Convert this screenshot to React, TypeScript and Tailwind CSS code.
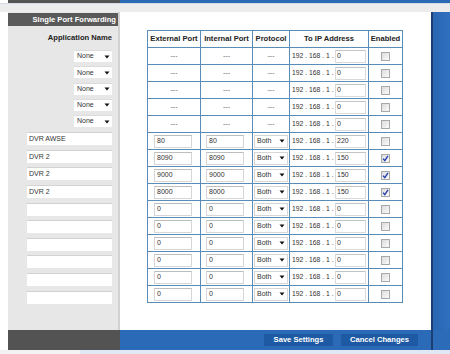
import React from "react";

const dashRows = 5;
const dataRows = [
  { ext: "80", int: "80", ip: "220", on: false },
  { ext: "8090", int: "8090", ip: "150", on: true },
  { ext: "9000", int: "9000", ip: "150", on: true },
  { ext: "8000", int: "8000", ip: "150", on: true },
  { ext: "0", int: "0", ip: "0", on: false },
  { ext: "0", int: "0", ip: "0", on: false },
  { ext: "0", int: "0", ip: "0", on: false },
  { ext: "0", int: "0", ip: "0", on: false },
  { ext: "0", int: "0", ip: "0", on: false },
  { ext: "0", int: "0", ip: "0", on: false },
];
const appNames = ["DVR AWSE", "DVR 2", "DVR 2", "DVR 2", "", "", "", "", "", ""];

function Arrow() {
  return (
    <svg width="6" height="4" viewBox="0 0 6 4" className="shrink-0">
      <path d="M0.5 0.5H5.5L3 3.5Z" fill="#111" />
    </svg>
  );
}

function Check({ on }: { on: boolean }) {
  return (
    <div className="mx-auto w-[9px] h-[9px] border border-[#a9a9a9] bg-gradient-to-br from-[#dcdcdc] to-[#fbfbfb] flex items-center justify-center">
      {on && (
        <svg width="7" height="7" viewBox="0 0 7 7">
          <path d="M1 3.6L2.8 5.6L6 0.8" stroke="#2a3fb0" strokeWidth="1.4" fill="none" />
        </svg>
      )}
    </div>
  );
}

function Cell({ children, className = "" }: { children?: React.ReactNode; className?: string }) {
  return (
    <td className={"border border-[#5a8cb8] p-0 align-middle " + className}>{children}</td>
  );
}

function Ip({ value }: { value: string }) {
  return (
    <div className="flex items-center pl-[2px] text-[#333]">
      <span className="w-[43px] shrink-0 whitespace-nowrap text-[6.8px]">192 . 168 . 1 .</span>
      <div className="w-[31px] h-[13px] border border-[#dadada] border-t-[#c4c4c4] bg-white text-[7px] leading-[9px] pl-[1px]">
        {value}
      </div>
    </div>
  );
}

export default function App() {
  return (
    <div
      className="w-[450px] h-[354px] bg-white overflow-hidden flex flex-col text-[#222]"
      style={{ fontFamily: '"Liberation Sans", Arial, sans-serif' }}
    >
      {/* top strip */}
      <div className="flex h-[3px]">
        <div className="w-[8px] bg-white" />
        <div className="w-[112px] bg-[#545454]" />
        <div className="flex-1 bg-[#2b6ab5]" />
      </div>
      <div className="h-[1px] bg-[#d5dce4]" />
      <div className="h-[8px] bg-[#ececec]" />

      {/* middle */}
      <div className="flex h-[318px]">
        <div className="w-[8px]" />
        {/* left panel */}
        <div className="w-[112px] bg-[#e7e7e7] border-r-2 border-[#d2d2d2] flex flex-col">
          <div className="mt-[1px] h-[13px] bg-[#5a5a5a] text-white font-bold text-[7.6px] flex items-center justify-end pr-[2px]">
            Single Port Forwarding
          </div>
          <div className="h-[24px] flex items-center justify-end pr-[6px] font-bold text-[7.6px] text-[#222]">
            Application Name
          </div>
          <div className="flex flex-col gap-[4.3px] items-end pr-[6px]">
            {[0, 1, 2, 3, 4].map((i) => (
              <div
                key={i}
                className="w-[38px] h-[12px] bg-white border-t border-[#dcdcdc] flex items-center justify-between pl-[3px] pr-[2px] text-[7px] text-[#333]"
              >
                <span>None</span>
                <Arrow />
              </div>
            ))}
          </div>
          <div className="flex flex-col gap-[4.6px] items-end pr-[6px] mt-[5px]">
            {appNames.map((n, i) => (
              <div
                key={i}
                className="w-[85px] h-[13px] bg-white border-t border-[#d2d2d2] flex items-center pl-[2px] text-[7px] text-[#333]"
              >
                {n}
              </div>
            ))}
          </div>
        </div>

        {/* main */}
        <div className="w-[311px] bg-white pl-[27px] pt-[18px]">
          <table className="border-collapse table-fixed w-[255px] text-[7px]">
            <colgroup>
              <col className="w-[53px]" />
              <col className="w-[52px]" />
              <col className="w-[37px]" />
              <col className="w-[79px]" />
              <col className="w-[34px]" />
            </colgroup>
            <thead>
              <tr className="h-[17px] font-bold text-[7.6px] text-[#222]">
                <Cell className="text-center">External Port</Cell>
                <Cell className="text-center">Internal Port</Cell>
                <Cell className="text-center">Protocol</Cell>
                <Cell className="text-center">To IP Address</Cell>
                <Cell className="text-center">Enabled</Cell>
              </tr>
            </thead>
            <tbody>
              {Array.from({ length: dashRows }).map((_, i) => (
                <tr key={"d" + i} className="h-[17px]">
                  <Cell className="text-center text-[#666]">---</Cell>
                  <Cell className="text-center text-[#666]">---</Cell>
                  <Cell className="text-center text-[#666]">---</Cell>
                  <Cell>
                    <Ip value="0" />
                  </Cell>
                  <Cell>
                    <Check on={false} />
                  </Cell>
                </tr>
              ))}
              {dataRows.map((r, i) => (
                <tr key={"r" + i} className="h-[17px] text-[#333]">
                  <Cell>
                    <div className="ml-[6px] w-[38px] h-[13px] border border-[#d6d6d6] border-t-[#bdbdbd] flex items-center pl-[2px]">
                      {r.ext}
                    </div>
                  </Cell>
                  <Cell>
                    <div className="ml-[5px] w-[38px] h-[13px] border border-[#d6d6d6] border-t-[#bdbdbd] flex items-center pl-[2px]">
                      {r.int}
                    </div>
                  </Cell>
                  <Cell>
                    <div className="ml-[1px] w-[34px] h-[13px] border border-[#d6d6d6] flex items-center justify-between pl-[2px] pr-[2px]">
                      <span>Both</span>
                      <Arrow />
                    </div>
                  </Cell>
                  <Cell>
                    <Ip value={r.ip} />
                  </Cell>
                  <Cell>
                    <Check on={r.on} />
                  </Cell>
                </tr>
              ))}
            </tbody>
          </table>
        </div>

        {/* right blue panel */}
        <div className="w-[2px] bg-[#1b3f70]" />
        <div className="flex-1 bg-gradient-to-r from-[#2a66b1] to-[#2f6fbf]" />
      </div>

      {/* bottom bar */}
      <div className="flex h-[20px]">
        <div className="w-[8px] bg-white" />
        <div className="w-[112px] bg-[#535353]" />
        <div className="w-[311px] bg-[#2a6ab6] flex items-center pl-[144px] gap-[8px]">
          <div className="w-[69px] h-[12px] bg-[#1d5aa3] text-white font-bold text-[7.6px] flex items-center justify-center">
            Save Settings
          </div>
          <div className="w-[77px] h-[12px] bg-[#1d5aa3] text-white font-bold text-[7.6px] flex items-center justify-center">
            Cancel Changes
          </div>
        </div>
        <div className="w-[2px] bg-[#1b3f70]" />
        <div className="flex-1 bg-[#2b6bb7]" />
      </div>
      <div className="flex-1 flex">
        <div className="w-[80px] bg-[#f2f2f2]" />
        <div className="flex-1 bg-[#dfe8f4]" />
      </div>
    </div>
  );
}
